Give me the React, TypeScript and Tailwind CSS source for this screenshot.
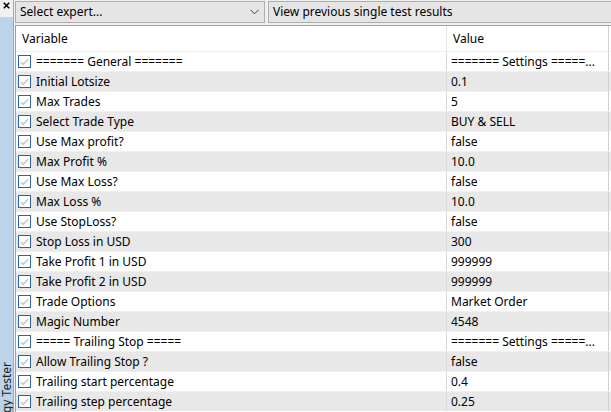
import React from "react";

type Row = { name: string; value: string };

const rows: Row[] = [
  { name: "======= General =======", value: "======= Settings =====..." },
  { name: "Initial Lotsize", value: "0.1" },
  { name: "Max Trades", value: "5" },
  { name: "Select Trade Type", value: "BUY & SELL" },
  { name: "Use Max profit?", value: "false" },
  { name: "Max Profit %", value: "10.0" },
  { name: "Use Max Loss?", value: "false" },
  { name: "Max Loss %", value: "10.0" },
  { name: "Use StopLoss?", value: "false" },
  { name: "Stop Loss in USD", value: "300" },
  { name: "Take Profit 1 in USD", value: "999999" },
  { name: "Take Profit 2 in USD", value: "999999" },
  { name: "Trade Options", value: "Market Order" },
  { name: "Magic Number", value: "4548" },
  { name: "===== Trailing Stop =====", value: "======= Settings =====..." },
  { name: "Allow Trailing Stop ?", value: "false" },
  { name: "Trailing start percentage", value: "0.4" },
  { name: "Trailing step percentage", value: "0.25" },
];

function CheckBox() {
  return (
    <span className="flex h-[13px] w-[13px] shrink-0 items-center justify-center border border-[#2a64a8] bg-white">
      <svg width="9" height="8" viewBox="0 0 9 8">
        <path d="M1 4.2 L3.4 6.5 L8 1.2" fill="none" stroke="#bdbdbd" strokeWidth="1.2" />
      </svg>
    </span>
  );
}

export default function App() {
  return (
    <div
      className="flex h-[412px] w-[611px] overflow-hidden bg-white text-[12px] text-black"
      style={{ fontFamily: '"Noto Sans", "Open Sans", sans-serif' }}
    >
      {/* docked window tab strip */}
      <div className="flex w-[13px] shrink-0 flex-col">
        <div className="flex h-[17px] items-start justify-center bg-[#f0f0f0] pt-[2px]">
          <svg width="7" height="7" viewBox="0 0 7 7">
            <path d="M0.8 0.8 L6.2 6.2 M6.2 0.8 L0.8 6.2" stroke="#000" strokeWidth="1.6" />
          </svg>
        </div>
        <div className="relative flex-1 overflow-hidden bg-[#bcd3ea]">
          <span className="absolute bottom-[-34px] left-[0px] whitespace-nowrap text-[12px] leading-[13px] text-[#1e1e1e] [writing-mode:vertical-rl] rotate-180">
            Strategy Tester
          </span>
        </div>
      </div>
      <div className="w-[1px] shrink-0 bg-[#a9a9a9]" />
      <div className="flex min-w-0 flex-1 flex-col bg-[#f0f0f0] pl-[1px]">
        {/* toolbar */}
        <div className="flex h-[25px] shrink-0 items-start gap-[3px] pt-[1px]">
          <div className="flex h-[22px] w-[250px] items-center justify-between border border-[#adadad] bg-[#e5e5e5] pl-[4px] pr-[5px]">
            <span>Select expert...</span>
            <svg width="9" height="6" viewBox="0 0 9 6">
              <path d="M0.5 0.8 L4.5 4.8 L8.5 0.8" fill="none" stroke="#3c3c3c" strokeWidth="1" />
            </svg>
          </div>
          <div className="flex h-[22px] flex-1 items-center border border-r-0 border-[#adadad] bg-[#e5e5e5] pl-[4px]">
            <span>View previous single test results</span>
          </div>
        </div>
        {/* inputs grid */}
        <div className="flex min-h-0 flex-1 flex-col border-l border-t border-[#a0a0a0] bg-white">
          <div className="flex h-[25px] shrink-0">
            <div className="flex w-[430px] items-center pl-[6px]">Variable</div>
            <div className="w-[1px] bg-[#e5e5e5]" />
            <div className="flex flex-1 items-center pl-[6px]">Value</div>
            <div className="w-[1px] bg-[#d0d0d0] mr-[2px]" />
          </div>
          {rows.map((r, i) => (
            <div
              key={i}
              className={`flex h-[20px] shrink-0 border-t border-[#f0f0f0] ${i % 2 === 1 ? "bg-[#e8e8e8]" : "bg-white"}`}
            >
              <div className="flex w-[430px] items-center gap-[5px] pl-[2px]">
                <CheckBox />
                <span className="whitespace-nowrap">{r.name}</span>
              </div>
              <div className="w-[1px] bg-[#d9d9d9]" />
              <div className="flex flex-1 items-center pl-[4px] whitespace-nowrap">{r.value}</div>
              <div className="w-[1px] bg-[#d0d0d0] mr-[2px]" />
            </div>
          ))}
        </div>
      </div>
    </div>
  );
}
